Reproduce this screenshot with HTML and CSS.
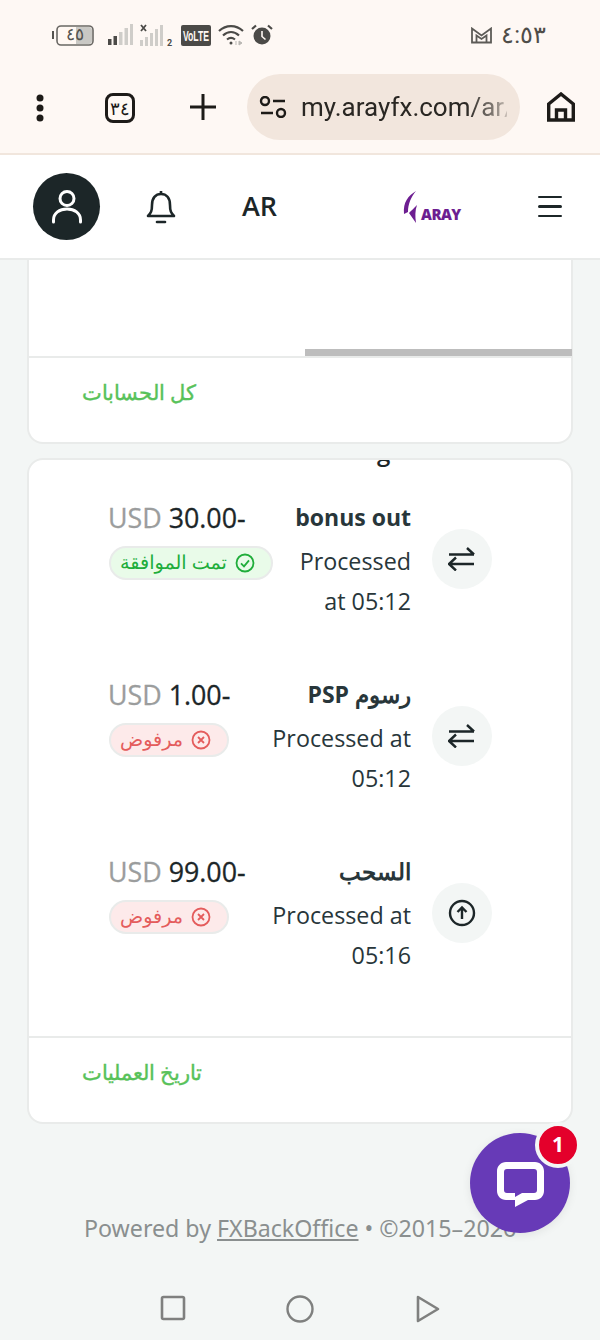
FILE: index.html
```html
<!DOCTYPE html>
<html lang="ar">
<head>
<meta charset="utf-8">
<title>Aray</title>
<link rel="stylesheet" href="styles.css">
</head>
<body>
<div class="screen">
  <div class="statusbar">
    <div class="status-left">
      <svg class="s-batt" width="44" height="22" viewBox="0 0 44 22"><rect x="0" y="7" width="2" height="8" fill="#55534f"/><rect x="5" y="2" width="36" height="19" rx="4" fill="#fff8f3" stroke="#6a6864" stroke-width="1.6"/><path d="M24 3h13a3 3 0 0 1 3 3v11a3 3 0 0 1-3 3H24z" fill="#c9c8c4"/></svg>
      <span class="batt-num">٤٥</span>
      <svg width="25" height="22" viewBox="0 0 25 22"><rect x="0" y="15" width="3.5" height="6" fill="#4b4a47"/><rect x="5.5" y="12" width="3.5" height="9" fill="#4b4a47"/><rect x="11" y="8" width="3.5" height="13" fill="#cfcdc9"/><rect x="16.500" y="4" width="3.500" height="17" fill="#cfcdc9"/><rect x="22" y="0" width="3" height="21" fill="#cfcdc9"/></svg>
      <svg width="34" height="24" viewBox="0 0 34 24"><rect x="0" y="17" width="3" height="6" fill="#cfcdc9"/><rect x="5" y="14" width="3" height="9" fill="#cfcdc9"/><rect x="10" y="10" width="3" height="13" fill="#cfcdc9"/><rect x="15" y="6" width="3" height="17" fill="#cfcdc9"/><rect x="20" y="2" width="3" height="21" fill="#cfcdc9"/><path d="M1 2l5 6M6 2L1 8" stroke="#4b4a47" stroke-width="1.8"/><text x="27" y="23" class="sim">2</text></svg>
      <svg width="30" height="21" viewBox="0 0 30 21"><rect width="30" height="21" rx="2" fill="#4b4a47"/><text x="2" y="15.500" class="volte-text" textLength="26" lengthAdjust="spacingAndGlyphs">VoLTE</text></svg>
      <svg width="26" height="22" viewBox="0 0 26 22" fill="none" stroke="#4b4a47" stroke-width="2.200"><path d="M1 7c7-6.500 17-6.500 24 0"/><path d="M5 11.500c5-4.500 11-4.500 16 0"/><path d="M9 15.500c2.500-2 5.500-2 8 0"/><circle cx="13" cy="19" r="1.500" fill="#4b4a47" stroke="none"/><path d="M18 21v-4M21 17l3 2-3 2z" stroke="#b9b7b3" stroke-width="1" fill="#b9b7b3"/></svg>
      <svg width="22" height="22" viewBox="0 0 22 22"><circle cx="11" cy="12" r="8.500" fill="#4b4a47"/><path d="M11 7v5.500l3.500 3" stroke="#fff8f3" stroke-width="1.600" fill="none"/><path d="M1 5l4-3.500M21 5l-4-3.500" stroke="#4b4a47" stroke-width="2.200"/></svg>
    </div>
    <div class="status-right">
      <svg width="21" height="17" viewBox="0 0 21 17" fill="none" stroke="#5d5b57" stroke-width="1.800"><path d="M1 15.500V1.500l9.500 7 9.500-7v14z"/><path d="M5.500 15.500V8.500l5 3.500 5-3.500v7"/></svg>
      <span class="clock">٤:٥٣</span>
    </div>
  </div>

  <div class="toolbar">
    <svg class="t-icon" width="8" height="28" viewBox="0 0 8 28"><circle cx="4" cy="4" r="3.500" fill="#1d1b18"/><circle cx="4" cy="14" r="3.500" fill="#1d1b18"/><circle cx="4" cy="24" r="3.500" fill="#1d1b18"/></svg>
    <span class="tabs">٣٤</span>
    <svg class="t-plus" width="28" height="28" viewBox="0 0 28 28"><path d="M1 14h26M14 1v26" stroke="#1d1b18" stroke-width="3"/></svg>
    <div class="urlbar">
      <svg width="28" height="22" viewBox="0 0 28 22" fill="none" stroke="#1d1b18" stroke-width="2.400"><circle cx="6" cy="5" r="4"/><path d="M14 5h12M2 17h12"/><circle cx="22" cy="17" r="4"/></svg>
      <span class="url">my.arayfx.com/ar/</span>
    </div>
    <svg class="t-home" width="28" height="30" viewBox="0 0 28 30" fill="none" stroke="#1d1b18" stroke-width="3.400"><path d="M1.700 28V12L14 2l12.300 10v16z"/><path d="M9.500 28V18h9v10"/></svg>
  </div>

  <header class="apphead">
    <div class="avatar"><svg width="32" height="36" viewBox="0 0 32 36" fill="none" stroke="#fff" stroke-width="3"><circle cx="16" cy="9.500" r="7"/><path d="M2.500 33v-2c0-7 6-11 13.500-11s13.500 4 13.500 11v2" stroke-linecap="round"/></svg></div>
    <svg class="bell" width="32" height="34" viewBox="0 0 32 34" fill="none" stroke="#1c2628" stroke-width="2.600"><path d="M3 26c3-3 4-5 4-11 0-7 3.500-11 9-11s9 4 9 11c0 6 1 8 4 11z" stroke-linejoin="round"/><path d="M16 1v3"/><path d="M12 32h8" stroke-linecap="round"/></svg>
    <span class="lang">AR</span>
    <div class="logo">
      <svg width="21" height="32" viewBox="0 0 21 32"><path d="M13 0C5 5 0 11 1 23l4-2C5 13 8 6 13 0z" fill="#6d1e91"/><path d="M14 14c-3 3-6 6-8 8l7 10c-1-7-1-12 1-18z" fill="#6d1e91"/></svg>
      <span class="logo-text">ARAY</span>
    </div>
    <div class="burger"><span></span><span></span><span></span></div>
  </header>

  <main class="content">
    <section class="card card-top">
      <div class="chart-blank"><div class="scrollbar"></div></div>
      <div class="card-foot"><a class="foot-link">كل الحسابات</a></div>
    </section>

    <section class="card card-ops">
      <div class="clip-line">g</div>
      <div class="ops">
        <div class="op op-a">
          <div class="op-left">
            <div class="amount"><span class="cur">USD</span> <span>30.00-</span></div>
            <span class="badge badge-ok">
              <svg width="20" height="20" viewBox="0 0 20 20" fill="none" stroke="#20ad3b" stroke-width="1.800"><circle cx="10" cy="10" r="8.500"/><path d="M6 10.300l3 3 5-6"/></svg>
              <span class="badge-text">تمت الموافقة</span>
            </span>
          </div>
          <div class="op-right">
            <div class="op-title">bonus out</div>
            <div class="op-sub op-sub-a">Processed at&nbsp;05:12</div>
          </div>
          <div class="op-icon"><svg width="28" height="24" viewBox="0 0 28 24" fill="none" stroke="#1c2628" stroke-width="2.400"><path d="M1 7.500h25M19 1l7 6.500M1 17h25M8 10.500L1 17l7 6.500"/></svg></div>
        </div>

        <div class="op op-b">
          <div class="op-left">
            <div class="amount"><span class="cur">USD</span> <span>1.00-</span></div>
            <span class="badge badge-no">
              <svg width="20" height="20" viewBox="0 0 20 20" fill="none" stroke="#e45c5c" stroke-width="1.800"><circle cx="10" cy="10" r="8.500"/><path d="M7 7l6 6M13 7l-6 6"/></svg>
              <span class="badge-text">مرفوض</span>
            </span>
          </div>
          <div class="op-right">
            <div class="op-title" dir="rtl">رسوم PSP</div>
            <div class="op-sub">Processed at 05:12</div>
          </div>
          <div class="op-icon"><svg width="28" height="24" viewBox="0 0 28 24" fill="none" stroke="#1c2628" stroke-width="2.400"><path d="M1 7.500h25M19 1l7 6.500M1 17h25M8 10.500L1 17l7 6.500"/></svg></div>
        </div>

        <div class="op op-c">
          <div class="op-left">
            <div class="amount"><span class="cur">USD</span> <span>99.00-</span></div>
            <span class="badge badge-no">
              <svg width="20" height="20" viewBox="0 0 20 20" fill="none" stroke="#e45c5c" stroke-width="1.800"><circle cx="10" cy="10" r="8.500"/><path d="M7 7l6 6M13 7l-6 6"/></svg>
              <span class="badge-text">مرفوض</span>
            </span>
          </div>
          <div class="op-right">
            <div class="op-title" dir="rtl">السحب</div>
            <div class="op-sub">Processed at 05:16</div>
          </div>
          <div class="op-icon"><svg width="28" height="28" viewBox="0 0 28 28" fill="none" stroke="#1c2628" stroke-width="2.400"><circle cx="14" cy="14" r="12"/><path d="M14 20V9M9.500 13L14 8.500l4.500 4.500"/></svg></div>
        </div>
      </div>
      <div class="card-foot card-foot-ops"><a class="foot-link">تاريخ العمليات</a></div>
    </section>

    <footer class="powered">Powered by <a class="powered-link">FXBackOffice</a> • ©2015–2026</footer>
  </main>

  <div class="navbar">
    <svg width="26" height="26" viewBox="0 0 26 26" fill="none" stroke="#7f807f" stroke-width="2.600"><rect x="2" y="2" width="22" height="22" rx="1.500"/></svg>
    <svg width="28" height="28" viewBox="0 0 28 28" fill="none" stroke="#7f807f" stroke-width="2.400"><circle cx="14" cy="14" r="12.500"/></svg>
    <svg width="24" height="28" viewBox="0 0 24 28" fill="none" stroke="#7f807f" stroke-width="2.600" stroke-linejoin="round"><path d="M2 2l20 12L2 26z"/></svg>
  </div>

  <div class="chat">
    <svg width="47" height="45" viewBox="0 0 47 45"><path fill-rule="evenodd" fill="#fff" d="M9 0h29c5 0 9 4 9 9v20c0 5-4 9-9 9h-7L18 45v-7H9c-5 0-9-4-9-9V9c0-5 4-9 9-9zm1 7c-2 0-3 1-3 3v18c0 2 1 3 3 3h8v4l7-4h12c2 0 3-1 3-3V10c0-2-1-3-3-3z"/></svg>
    <span class="chat-badge">1</span>
  </div>
</div>
</body>
</html>
```

FILE: styles.css
```css
* { box-sizing: border-box; }
html, body { margin: 0; padding: 0; }
body { width: 600px; height: 1340px; overflow: hidden; font-family: "Open Sans", "Noto Sans", sans-serif; background: #f3f6f5; color: #1c2628; }
.screen { position: relative; width: 600px; height: 1340px; overflow: hidden; display: flex; flex-direction: column; }

.statusbar { height: 70px; flex: none; background: #fef8f4; display: flex; justify-content: space-between; align-items: flex-start; padding: 23px 52px 0 52px; position: relative; }
.status-left { display: flex; align-items: center; gap: 7px; height: 24px; position: relative; }
.s-batt { margin-right: 5px; }
.batt-num { position: absolute; left: 14px; top: 1px; font-size: 17px; color: #55534f; font-family: "Noto Sans", sans-serif; line-height: 20px; letter-spacing: 1px; }
.sim { font: 700 9px "Roboto", sans-serif; fill: #4b4a47; }
.volte-text { font: 700 14px "Liberation Sans", sans-serif; fill: #fff8f3; }
.status-right { display: flex; align-items: center; gap: 9px; height: 24px; padding-right: 2px; }
.clock { font: 24px "Roboto", "Noto Sans", sans-serif; color: #4f4d49; direction: ltr; letter-spacing: 1.500px; }

.toolbar { height: 85px; flex: none; background: #fef8f4; border-bottom: 2px solid #f1e6dd; display: flex; align-items: flex-start; position: relative; padding: 4px 0 0 36px; }
.t-icon { margin-top: 20px; flex: none; }
.tabs { flex: none; width: 30px; height: 30px; margin: 19px 0 0 61px; border: 3px solid #1d1b18; border-radius: 8px; font: 18px "Noto Sans", sans-serif; color: #1d1b18; display: flex; align-items: center; justify-content: center; line-height: 1; letter-spacing: 0.500px; }
.t-plus { margin: 19px 0 0 54px; flex: none; }
.urlbar { flex: none; width: 273px; height: 66px; margin-left: 30px; background: #f2e6dd; border-radius: 33px; display: flex; align-items: center; padding: 0 12px; gap: 14px; overflow: hidden; }
.urlbar svg { flex: none; }
.url { font: 26px "Roboto", sans-serif; color: #2a2723; white-space: nowrap; overflow: hidden; width: 206px; flex: none; -webkit-mask-image: linear-gradient(to right, #000 80%, rgba(0,0,0,.55) 94%, rgba(0,0,0,.2) 100%); mask-image: linear-gradient(to right, #000 80%, rgba(0,0,0,.55) 94%, rgba(0,0,0,.2) 100%); }
.t-home { margin: 18px 0 0 27px; flex: none; }

.apphead { height: 105px; flex: none; background: #fff; border-bottom: 2px solid #e9ebea; display: flex; align-items: center; position: relative; padding: 0 38px 0 33px; }
.avatar { width: 67px; height: 67px; border-radius: 50%; background: #1c2628; display: flex; align-items: center; justify-content: center; flex: none; }
.bell { margin-left: 45px; flex: none; }
.lang { margin: 0 0 2px 65px; font: 600 27px "Open Sans", sans-serif; color: #1c2628; flex: none; }
.logo { margin-left: 126px; display: flex; align-items: flex-end; flex: none; width: 60px; height: 32px; }
.logo-text { font: 800 15px "Open Sans", sans-serif; color: #6d1e91; letter-spacing: -0.6px; margin-left: -3px; line-height: 18px; }
.burger { margin-left: auto; width: 24px; display: flex; flex-direction: column; gap: 7px; }
.burger span { display: block; height: 2.500px; border-radius: 2px; background: #1c2628; }

.content { flex: 1; padding: 0 27px; display: flex; flex-direction: column; position: relative; min-height: 0; }
.card { background: #fff; border: 2px solid #e9ebea; }
.card-top { height: 184px; border-top: 0; border-radius: 0 0 16px 16px; display: flex; flex-direction: column; }
.chart-blank { height: 98px; position: relative; border-bottom: 2px solid #e9ebea; flex: none; }
.scrollbar { position: absolute; left: 276px; right: -1px; bottom: 0; height: 7px; background: #bdbdbd; }
.card-foot { flex: 1; display: flex; align-items: center; padding: 0 0 16px 53px; }
.foot-link { font: 400 20.600px "Noto Sans", "Open Sans", sans-serif; color: #58c25a; direction: rtl; -webkit-text-stroke: 0.400px currentColor; }

.card-ops { height: 666px; margin-top: 14px; border-radius: 16px; display: flex; flex-direction: column; overflow: hidden; position: relative; }
.clip-line { position: absolute; left: 348px; top: -23px; font: 600 24px "Open Sans", sans-serif; line-height: 30px; }
.ops { flex: none; height: 576px; position: relative; }
.op { display: flex; align-items: flex-start; padding: 0 79px 0 79px; position: absolute; left: 0; right: 0; }
.op-a { top: 37px; }
.op-b { top: 214px; }
.op-c { top: 391px; }
.op-left { flex: 1; min-width: 0; display: flex; flex-direction: column; align-items: flex-start; }
.amount { font: 500 26.800px/40px "Open Sans", sans-serif; color: #1c2628; white-space: nowrap; margin-top: 1px; -webkit-text-stroke: 0.300px currentColor; }
.cur { color: #9b9d9d; }
.badge { height: 34px; margin: 8px 0 0 1px; border-radius: 17px; display: inline-flex; align-items: center; gap: 8px; padding: 0 16px 0 9px; font: 19.200px "Noto Sans", "Open Sans", sans-serif; text-rendering: geometricPrecision; border: 2px solid #e9ebea; white-space: nowrap; flex: none; }
.badge-text { margin-top: -4px; }
.badge-ok { background: #e9fbe9; color: #20ad3b; flex-direction: row-reverse; }
.badge-no { background: #fdeaea; color: #e45c5c; flex-direction: row-reverse; }
.op-right { width: 148px; text-align: right; flex: none; margin: 0 21px 0 0; }
.op-title { font: 700 23px/40px "Open Sans", "Noto Sans", sans-serif; color: #28363a; white-space: nowrap; }
.op-sub { font: 400 23.300px/39.500px "Open Sans", sans-serif; color: #28363a; margin: 5px 0 0 -40px; }
.op-sub-a { margin-left: 0; }
.op-icon { width: 60px; height: 60px; border-radius: 50%; background: #f3f6f5; display: flex; align-items: center; justify-content: center; flex: none; margin-top: 32px; }
.card-foot-ops { border-top: 2px solid #e9ebea; }

.powered { position: absolute; top: 0; left: 84px; margin-top: 952px; font: 23.200px "Noto Sans", "Open Sans", sans-serif; color: #8a8f8f; white-space: nowrap; }
.powered-link { text-decoration: underline; }

.navbar { height: 0; position: relative; }
.navbar svg { position: absolute; top: -45px; }
.navbar svg:nth-child(1) { left: 160px; }
.navbar svg:nth-child(2) { left: 286px; }
.navbar svg:nth-child(3) { left: 416px; }

.chat { position: absolute; left: 470px; top: 1133px; width: 100px; height: 100px; border-radius: 50%; background: #673ab7; display: flex; align-items: center; justify-content: center; box-shadow: 0 2px 10px rgba(0,0,0,.08); }
.chat svg { margin-top: 2px; }
.chat-badge { position: absolute; left: 65px; top: -11px; width: 46px; height: 46px; border-radius: 50%; background: #e4002b; border: 4px solid #f3f6f5; color: #fff; font: 700 21px/37px "Open Sans", sans-serif; text-align: center; }
```
